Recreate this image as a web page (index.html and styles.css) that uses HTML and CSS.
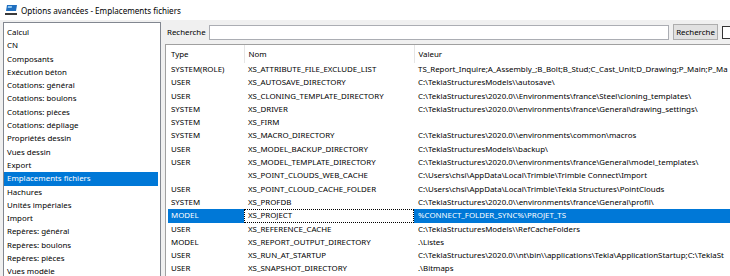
FILE: index.html
```html
<!DOCTYPE html>
<html lang="fr">
<head>
    <meta charset="UTF-8">
    <title>Options avancées - Emplacements fichiers</title>
    <link rel="stylesheet" href="styles.css">
</head>
<body>

<div class="titlebar">
    <svg class="appicon" width="13" height="12" viewBox="0 0 13 12">
        <path d="M2 1 L12 1 L11 7 L1 7 Z" fill="#1f6fc0"/>
        <path d="M3 2 L7 2 L6.7 4 L2.7 4 Z" fill="#8cc4f0"/>
        <rect x="0" y="9" width="12" height="2" fill="#3a3a3a"/>
    </svg>
    <span>Options avancées - Emplacements fichiers</span>
</div>

<div class="window">
    <!-- Liste des catégories -->
    <ul class="tree">
        <li>Calcul</li>
        <li>CN</li>
        <li>Composants</li>
        <li>Exécution béton</li>
        <li>Cotations: général</li>
        <li>Cotations: boulons</li>
        <li>Cotations: pièces</li>
        <li>Cotations: dépliage</li>
        <li>Propriétés dessin</li>
        <li>Vues dessin</li>
        <li>Export</li>
        <li class="selected">Emplacements fichiers</li>
        <li>Hachures</li>
        <li>Unités impériales</li>
        <li>Import</li>
        <li>Repères: général</li>
        <li>Repères: boulons</li>
        <li>Repères: pièces</li>
        <li>Vues modèle</li>
    </ul>

    <div class="main">
        <div class="search">
            <label class="search-label">Recherche</label>
            <input class="search-input" type="text">
            <button class="btn">Recherche</button>
            <span class="check"></span>
        </div>

        <div class="grid">
            <table>
                <colgroup>
                    <col class="col-type">
                    <col class="col-name">
                    <col class="col-value">
                </colgroup>
                <thead>
                    <tr><th>Type</th><th>Nom</th><th>Valeur</th></tr>
                </thead>
                <tbody>
                    <tr><td>SYSTEM(ROLE)</td><td>XS_ATTRIBUTE_FILE_EXCLUDE_LIST</td><td>TS_Report_Inquire;A_Assembly_;B_Bolt;B_Stud;C_Cast_Unit;D_Drawing;P_Main;P_Ma</td></tr>
                    <tr><td>USER</td><td>XS_AUTOSAVE_DIRECTORY</td><td>C:\TeklaStructuresModels\\autosave\</td></tr>
                    <tr><td>USER</td><td>XS_CLONING_TEMPLATE_DIRECTORY</td><td>C:\TeklaStructures\2020.0\\Environments\france\Steel\cloning_templates\</td></tr>
                    <tr><td>SYSTEM</td><td>XS_DRIVER</td><td>C:\TeklaStructures\2020.0\\environments\france\General\drawing_settings\</td></tr>
                    <tr><td>SYSTEM</td><td>XS_FIRM</td><td></td></tr>
                    <tr><td>SYSTEM</td><td>XS_MACRO_DIRECTORY</td><td>C:\TeklaStructures\2020.0\\environments\common\macros</td></tr>
                    <tr><td>USER</td><td>XS_MODEL_BACKUP_DIRECTORY</td><td>C:\TeklaStructuresModels\\backup\</td></tr>
                    <tr><td>USER</td><td>XS_MODEL_TEMPLATE_DIRECTORY</td><td>C:\TeklaStructures\2020.0\\environments\france\General\model_templates\</td></tr>
                    <tr><td></td><td>XS_POINT_CLOUDS_WEB_CACHE</td><td>C:\Users\chsi\AppData\Local\Trimble\Trimble Connect\Import</td></tr>
                    <tr><td>USER</td><td>XS_POINT_CLOUD_CACHE_FOLDER</td><td>C:\Users\chsi\AppData\Local\Trimble\Tekla Structures\PointClouds</td></tr>
                    <tr><td>SYSTEM</td><td>XS_PROFDB</td><td>C:\TeklaStructures\2020.0\\environments\france\General\profil\</td></tr>
                    <tr class="selected"><td>MODEL</td><td class="focus">XS_PROJECT</td><td>%CONNECT_FOLDER_SYNC%\PROJET_TS</td></tr>
                    <tr><td>USER</td><td>XS_REFERENCE_CACHE</td><td>C:\TeklaStructuresModels\\RefCacheFolders</td></tr>
                    <tr><td>MODEL</td><td>XS_REPORT_OUTPUT_DIRECTORY</td><td>.\Listes</td></tr>
                    <tr><td>USER</td><td>XS_RUN_AT_STARTUP</td><td>C:\TeklaStructures\2020.0\\nt\bin\\applications\Tekla\ApplicationStartup;C:\TeklaSt</td></tr>
                    <tr><td>USER</td><td>XS_SNAPSHOT_DIRECTORY</td><td>.\Bitmaps</td></tr>
                </tbody>
            </table>
        </div>
    </div>
</div>

</body>
</html>
```

FILE: styles.css
```css
html, body {
    margin: 0;
    padding: 0;
}

body {
    width: 730px;
    height: 276px;
    overflow: hidden;
    background: #f0f0f0;
    color: #000;
    font-family: "Noto Sans", "Open Sans", sans-serif;
    font-size: 7.9px;
}

.titlebar {
    height: 20px;
    background: #fff;
    display: flex;
    align-items: center;
    gap: 3px;
    padding-left: 5px;
    font-size: 8.1px;
    color: #000;
}

.appicon {
    display: block;
}

.window {
    display: flex;
    gap: 4px;
    width: 800px;
    height: 256px;
    padding: 2px 0 0 3px;
    box-sizing: border-box;
}

.tree {
    list-style: none;
    margin: 0;
    padding: 3px 0 0 0;
    width: 158px;
    flex: none;
    box-sizing: border-box;
    background: #fff;
    border: 1px solid #828790;
    border-bottom: none;
}

.tree li {
    height: 13.3px;
    line-height: 13.3px;
    padding-left: 3px;
    margin-right: 2px;
    white-space: nowrap;
}

.tree li.selected {
    background: #0078d7;
    color: #fff;
}

.main {
    flex: 1;
    display: flex;
    flex-direction: column;
}

.search {
    display: flex;
    align-items: center;
    height: 16px;
    margin-top: 2px;
}

.search-label {
    width: 42px;
    padding-left: 2px;
}

.search-input {
    width: 460px;
    height: 15px;
    margin: 0;
    padding: 0;
    box-sizing: border-box;
    border: 1px solid #abadb3;
    background: #fff;
}

.btn {
    margin: 0 0 0 4px;
    width: 45px;
    height: 16px;
    padding: 0;
    box-sizing: border-box;
    background: #e1e1e1;
    border: 1px solid #adadad;
    font-family: inherit;
    font-size: inherit;
    color: #000;
}

.check {
    margin-left: 4px;
    width: 13px;
    height: 13px;
    box-sizing: border-box;
    border: 1px solid #333;
    background: #fff;
}

.grid {
    margin-top: 4px;
    flex: 1;
    background: #fff;
    border: 1px solid #a0a0a0;
    border-bottom: none;
    padding-left: 2px;
    overflow: hidden;
}

.grid table {
    border-collapse: collapse;
    table-layout: fixed;
    width: 563px;
}

.col-type {
    width: 76px;
}

.col-name {
    width: 170px;
}

.grid th {
    height: 18px;
    font-weight: normal;
    text-align: left;
    padding: 0 0 0 4px;
    border-right: 1px solid #e5e5e5;
    white-space: nowrap;
}

.grid th:first-child {
    padding-left: 3px;
}

.grid td {
    height: 13.3px;
    line-height: 13.3px;
    padding: 0 0 0 4px;
    white-space: nowrap;
    overflow: hidden;
}

.grid td:first-child {
    padding-left: 3px;
}

.grid tr.selected td {
    background: #0078d7;
    color: #fff;
}

.grid tr.selected td.focus {
    background: #fff;
    color: #000;
    outline: 1px dotted #000;
    outline-offset: -1px;
}
```
